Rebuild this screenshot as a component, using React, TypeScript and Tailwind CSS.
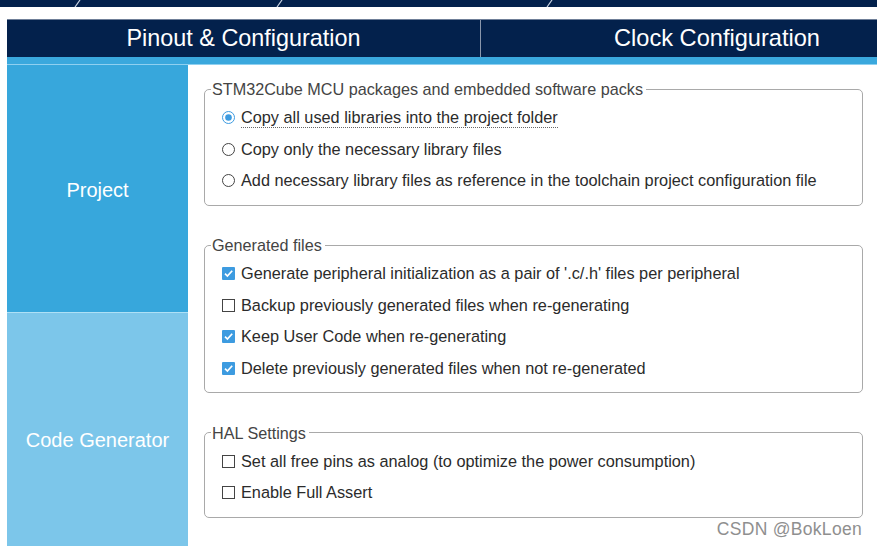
import React from 'react';

type Option = { label: string; checked: boolean; focused?: boolean };

const packOptions: Option[] = [
    { label: 'Copy all used libraries into the project folder', checked: true, focused: true },
    { label: 'Copy only the necessary library files', checked: false },
    { label: 'Add necessary library files as reference in the toolchain project configuration file', checked: false }
];

const generatedFiles: Option[] = [
    { label: "Generate peripheral initialization as a pair of '.c/.h' files per peripheral", checked: true },
    { label: 'Backup previously generated files when re-generating', checked: false },
    { label: 'Keep User Code when re-generating', checked: true },
    { label: 'Delete previously generated files when not re-generated', checked: true }
];

const halSettings: Option[] = [
    { label: 'Set all free pins as analog (to optimize the power consumption)', checked: false },
    { label: 'Enable Full Assert', checked: false }
];

const RadioIcon = ({ checked }: { checked: boolean }) => (
    <svg width="13" height="13" viewBox="0 0 13 13" className="shrink-0">
        {checked ? (
            <>
                <circle cx="6.5" cy="6.5" r="6" fill="#fff" stroke="#3d9be0" strokeWidth="1" />
                <circle cx="6.5" cy="6.5" r="3.3" fill="#3d9be0" />
            </>
        ) : (
            <circle cx="6.5" cy="6.5" r="6" fill="#fff" stroke="#444" strokeWidth="1" />
        )}
    </svg>
);

const CheckIcon = ({ checked }: { checked: boolean }) => (
    <svg width="13" height="13" viewBox="0 0 13 13" className="shrink-0">
        {checked ? (
            <>
                <rect x="0" y="0" width="13" height="13" rx="1" fill="#3d9be0" />
                <path d="M3 6.7 L5.4 9.1 L10.2 3.8" fill="none" stroke="#fff" strokeWidth="1.7" />
            </>
        ) : (
            <rect x="0.5" y="0.5" width="12" height="12" fill="#fff" stroke="#444" strokeWidth="1" />
        )}
    </svg>
);

const Group = ({ title, items, type }: { title: string; items: Option[]; type: 'radio' | 'check' }) => (
    <fieldset className="border border-[#a9a9a9] rounded-[5px] pl-[6px] pr-0 pt-[4px] pb-[8px] w-[659px]">
        <legend className="px-[1px] pr-[3px] text-[16.2px] leading-[18px] text-[#444]">{title}</legend>
        {items.map((item) => (
            <div key={item.label} className="h-[31.5px] flex items-center gap-[6px] pl-[11px]">
                {type === 'radio' ? <RadioIcon checked={item.checked} /> : <CheckIcon checked={item.checked} />}
                <span
                    className={`text-[16.3px] leading-[19px] text-[#2b2b2b] ${
                        item.focused ? 'border-b border-dotted border-[#666]' : ''
                    }`}
                >
                    {item.label}
                </span>
            </div>
        ))}
    </fieldset>
);

const App = () => {
    return (
        <div className="w-[877px] h-[546px] overflow-hidden bg-white relative font-['Liberation_Sans',Arial,sans-serif]">
            <div className="h-[7px] bg-[#03214c]">
                <svg width="877" height="7" className="block">
                    <line x1="75" y1="7" x2="80" y2="0" stroke="#c8d2e0" strokeWidth="1.2" />
                    <line x1="277" y1="7" x2="282" y2="0" stroke="#c8d2e0" strokeWidth="1.2" />
                    <line x1="547" y1="7" x2="552" y2="0" stroke="#c8d2e0" strokeWidth="1.2" />
                </svg>
            </div>
            <div className="h-[12px]" />
            <div className="ml-[7px] flex flex-col">
                <div className="h-[38px] bg-[#03214c] flex border-t border-[#6f7f98]">
                    <div className="w-[474px] flex items-center justify-center text-white text-[23.4px] border-r border-[#8a97ab] pt-[1px]">
                        Pinout &amp; Configuration
                    </div>
                    <div className="flex-1 flex items-center justify-center text-white text-[23.6px] pl-[76px] pt-[1px]">
                        Clock Configuration
                    </div>
                </div>
                <div className="h-[8px] bg-[#3aa8dd] border-b border-[#8fd0f0]" />
                <div className="flex">
                    <div className="w-[181px] flex flex-col shrink-0">
                        <div className="h-[247px] bg-[#37a7dc] flex items-center justify-center text-white text-[20px] pt-[3px]">
                            Project
                        </div>
                        <div className="h-[234px] bg-[#7cc6ea] border-t border-[#aee0f6] flex items-center justify-center text-white text-[20px] pt-[20px]">
                            Code Generator
                        </div>
                    </div>
                    <div className="flex flex-col pl-[16px] pt-[15px] gap-[30.5px]">
                        <Group title="STM32Cube MCU packages and embedded software packs" items={packOptions} type="radio" />
                        <Group title="Generated files" items={generatedFiles} type="check" />
                        <Group title="HAL Settings" items={halSettings} type="check" />
                    </div>
                </div>
            </div>
            <div className="absolute right-[15px] bottom-[4px] text-[17.5px] text-[#8f8f8f] tracking-[0.3px]">
                CSDN @BokLoen
            </div>
        </div>
    );
};

export default App;
